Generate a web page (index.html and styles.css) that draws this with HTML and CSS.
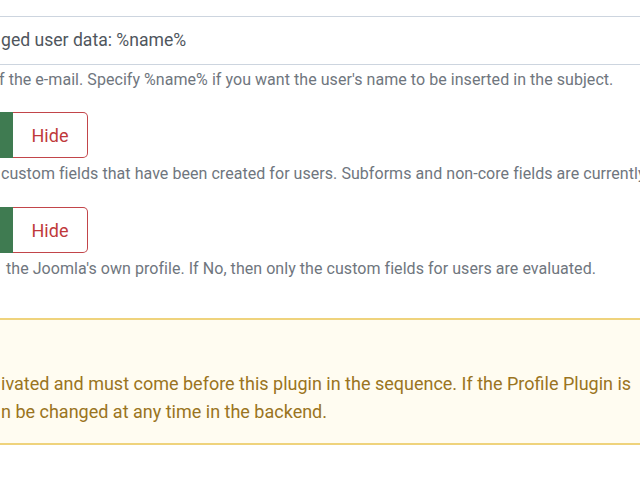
FILE: index.html
```html
<!DOCTYPE html>
<html>
<head>
<meta charset="utf-8">
<link rel="stylesheet" href="styles.css">
</head>
<body>
<div class="page">
  <div class="field">
    <div class="input">ged user data: %name%</div>
    <div class="help help-1">f the e-mail. Specify %name% if you want the user's name to be inserted in the subject.</div>
  </div>
  <div class="field">
    <div class="switcher switcher-1">
      <span class="switch-on"></span>
      <span class="switch-off">Hide</span>
    </div>
    <div class="help help-2">custom fields that have been created for users. Subforms and non-core fields are currently not supported.</div>
  </div>
  <div class="field">
    <div class="switcher switcher-2">
      <span class="switch-on"></span>
      <span class="switch-off">Hide</span>
    </div>
    <div class="help help-3">the Joomla's own profile. If No, then only the custom fields for users are evaluated.</div>
  </div>
  <div class="alert">
    <p>ivated and must come before this plugin in the sequence. If the Profile Plugin is</p>
    <p>n be changed at any time in the backend.</p>
  </div>
</div>
</body>
</html>
```
FILE: styles.css
```css
html, body {
  margin: 0;
  padding: 0;
  background: #ffffff;
}
body {
  width: 640px;
  height: 480px;
  overflow: hidden;
  font-family: Roboto, "Liberation Sans", sans-serif;
}
.page {
  width: 760px;
  margin-left: -40px;
  padding-top: 16px;
}
.field {
  display: flex;
  flex-direction: column;
}
.input {
  height: 47px;
  border: 1px solid #cdd5df;
  padding-left: 40px;
  font-size: 17.6px;
  line-height: 47px;
  color: #4f565d;
  white-space: nowrap;
}
.help {
  padding-left: 40px;
  font-size: 16px;
  color: #6f767e;
  white-space: nowrap;
  line-height: 20px;
  letter-spacing: 0.05px;
}
.help-1 {
  margin-top: 5px;
  margin-left: -1px;
}
.help-2 {
  margin-top: 6px;
  margin-left: 1px;
}
.help-3 {
  margin-top: 6px;
  margin-left: 6px;
}
.switcher {
  display: flex;
  height: 46px;
  width: 128px;
}
.switcher-1 {
  margin-top: 22px;
}
.switcher-2 {
  margin-top: 23px;
}
.switch-on {
  width: 53px;
  background: #3f7b51;
  border-radius: 4px 0 0 4px;
}
.switch-off {
  flex: 1;
  border: 1px solid #c2454a;
  border-left: none;
  border-radius: 0 5px 5px 0;
  color: #c0393b;
  font-size: 18px;
  display: flex;
  align-items: center;
  justify-content: center;
}
.alert {
  margin-top: 39px;
  border: 1px solid #efd37c;
  border-top-width: 2px;
  border-bottom-width: 2px;
  background: #fffcf1;
  padding-left: 40px;
  padding-top: 50px;
  box-sizing: border-box;
  height: 127px;
  color: #9a7421;
  font-size: 18px;
}
.alert p {
  margin: 0;
  line-height: 28px;
  white-space: nowrap;
}
```
